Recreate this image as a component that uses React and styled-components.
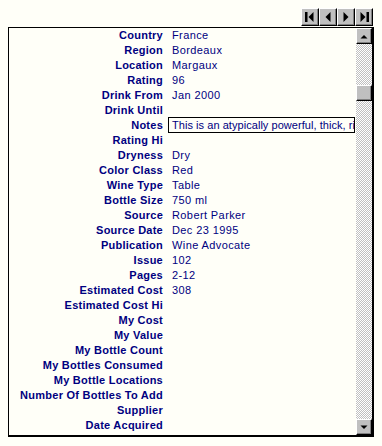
import React from "react";
import styled, { createGlobalStyle } from "styled-components";

const GlobalStyle = createGlobalStyle`
  html, body {
    margin: 0;
    padding: 0;
    background: #fffff8;
  }
  body {
    font-family: "Liberation Sans", Arial, sans-serif;
    font-size: 11px;
  }
`;

const Page = styled.div`
  width: 382px;
  height: 446px;
  padding: 8px 0 0 8px;
  box-sizing: border-box;
  background: #fffff8;
`;

const Toolbar = styled.div`
  display: flex;
  justify-content: flex-end;
  width: 365px;
  height: 19px;
`;

const NavButton = styled.button`
  width: 18px;
  height: 18px;
  padding: 0;
  margin: 0;
  background: #c0c0c0;
  border: 1px solid;
  border-color: #ffffff #000000 #000000 #ffffff;
  box-shadow: inset -1px -1px 0 #808080;
  display: flex;
  align-items: center;
  justify-content: center;
`;

const Frame = styled.div`
  display: flex;
  width: 366px;
  height: 410px;
  box-sizing: border-box;
  border-left: 1px solid #000;
  border-top: 1px solid #000;
  border-right: 2px solid #000;
  border-bottom: 2px solid #000;
  overflow: hidden;
`;

const List = styled.div`
  flex: 1;
  display: flex;
  flex-direction: column;
  overflow: hidden;
`;

const Row = styled.div`
  display: flex;
  align-items: flex-start;
  height: 15px;
  line-height: 14px;
  flex-shrink: 0;
`;

const Label = styled.div`
  width: 154px;
  text-align: right;
  font-weight: bold;
  letter-spacing: 0.25px;
  color: #000080;
  white-space: nowrap;
  padding-right: 9px;
  flex-shrink: 0;
`;

const Value = styled.div`
  color: #000080;
  letter-spacing: 0.4px;
  white-space: nowrap;
`;

const NoteBox = styled.div`
  margin-left: -4px;
  margin-top: -1px;
  width: 187px;
  height: 16px;
  box-sizing: border-box;
  border: 1px solid #000;
  padding: 0 3px;
  color: #000080;
  letter-spacing: 0.05px;
  white-space: nowrap;
  overflow: hidden;
  line-height: 14px;
`;

const Scrollbar = styled.div`
  width: 16px;
  display: flex;
  flex-direction: column;
  background: repeating-conic-gradient(#c0c0c0 0 25%, #ffffff 0 50%) 0 0 / 2px 2px;
`;

const ScrollButton = styled.div`
  width: 16px;
  height: 16px;
  box-sizing: border-box;
  background: #c0c0c0;
  border: 1px solid;
  border-color: #ffffff #000000 #000000 #ffffff;
  box-shadow: inset -1px -1px 0 #808080;
  display: flex;
  align-items: center;
  justify-content: center;
  flex-shrink: 0;
`;

const Track = styled.div`
  flex: 1;
  display: flex;
  flex-direction: column;
  padding-top: ${(p) => p.offset}px;
`;

const Icon = ({ kind }) => {
  const shapes = {
    first: (
      <>
        <rect x="2" y="2" width="2.5" height="10" />
        <polygon points="10.5,2 5.5,7 10.5,12" />
      </>
    ),
    prev: <polygon points="9.5,2 4.5,7 9.5,12" />,
    next: <polygon points="4.5,2 9.5,7 4.5,12" />,
    last: (
      <>
        <polygon points="3.5,2 8.5,7 3.5,12" />
        <rect x="9.5" y="2" width="2.5" height="10" />
      </>
    ),
  };
  return (
    <svg width="14" height="14" viewBox="0 0 14 14" fill="#000">
      {shapes[kind]}
    </svg>
  );
};

const Arrow = ({ up }) => (
  <svg width="8" height="5" viewBox="0 0 8 5" fill="#000">
    {up ? <polygon points="0.5,4.5 4,1 7.5,4.5" /> : <polygon points="0.5,0.5 7.5,0.5 4,4" />}
  </svg>
);

const fields = [
  ["Country", "France"],
  ["Region", "Bordeaux"],
  ["Location", "Margaux"],
  ["Rating", "96"],
  ["Drink From", "Jan 2000"],
  ["Drink Until", ""],
  ["Notes", "This is an atypically powerful, thick, rich wine", true],
  ["Rating Hi", ""],
  ["Dryness", "Dry"],
  ["Color Class", "Red"],
  ["Wine Type", "Table"],
  ["Bottle Size", "750 ml"],
  ["Source", "Robert Parker"],
  ["Source Date", "Dec 23 1995"],
  ["Publication", "Wine Advocate"],
  ["Issue", "102"],
  ["Pages", "2-12"],
  ["Estimated Cost", "308"],
  ["Estimated Cost Hi", ""],
  ["My Cost", ""],
  ["My Value", ""],
  ["My Bottle Count", ""],
  ["My Bottles Consumed", ""],
  ["My Bottle Locations", ""],
  ["Number Of Bottles To Add", ""],
  ["Supplier", ""],
  ["Date Acquired", ""],
];

export default function App() {
  return (
    <Page>
      <GlobalStyle />
      <Toolbar>
        {["first", "prev", "next", "last"].map((k) => (
          <NavButton key={k}>
            <Icon kind={k} />
          </NavButton>
        ))}
      </Toolbar>
      <Frame>
        <List>
          {fields.map(([label, value, boxed]) => (
            <Row key={label}>
              <Label>{label}</Label>
              {boxed ? <NoteBox>{value}</NoteBox> : <Value>{value}</Value>}
            </Row>
          ))}
        </List>
        <Scrollbar>
          <ScrollButton>
            <Arrow up />
          </ScrollButton>
          <Track offset={41}>
            <ScrollButton />
          </Track>
          <ScrollButton>
            <Arrow />
          </ScrollButton>
        </Scrollbar>
      </Frame>
    </Page>
  );
}
